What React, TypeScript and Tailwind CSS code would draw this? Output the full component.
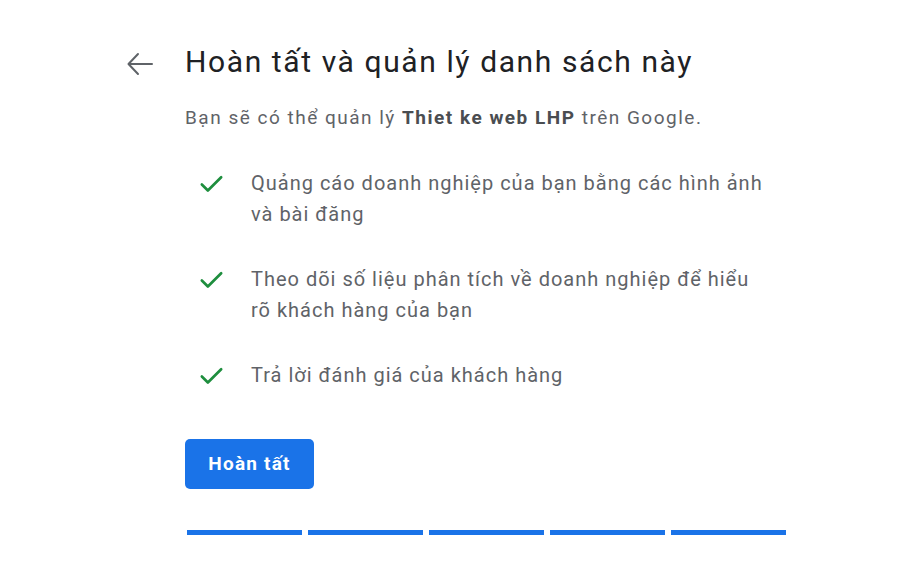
import { Check } from "lucide-react";

const items = [
  "Quảng cáo doanh nghiệp của bạn bằng các hình ảnh và bài đăng",
  "Theo dõi số liệu phân tích về doanh nghiệp để hiểu rõ khách hàng của bạn",
  "Trả lời đánh giá của khách hàng",
];

export default function App() {
  return (
    <div className="w-[900px] h-[572px] bg-white overflow-hidden font-['Roboto',sans-serif]">
      <div className="flex pt-[40px] pl-[124px]">
        {/* back arrow */}
        <div className="w-[61px] pt-[11px]">
          <svg width="32" height="26" viewBox="0 0 32 26" fill="none" stroke="#5f6368" strokeWidth="2" strokeLinecap="round" strokeLinejoin="round">
            <path d="M28 13H5" />
            <path d="M14 3L4.5 13L14 23" />
          </svg>
        </div>

        <div className="flex flex-col">
          <h1 className="text-[30px] leading-[44px] tracking-[1.6px] text-[#202124]">Hoàn tất và quản lý danh sách này</h1>
          <p className="mt-[21px] text-[19px] leading-[26px] tracking-[1.5px] text-[#5f6368]">
            Bạn sẽ có thể quản lý <span className="font-bold text-[#4a4d51]">Thiet ke web LHP</span> trên Google.
          </p>

          <ul className="mt-[37px] flex flex-col gap-[34px]">
            {items.map((t) => (
              <li key={t} className="flex">
                <div className="w-[66px] pl-[12px] pt-[2px]">
                  <Check size={29} strokeWidth={2.2} className="text-[#1e8e3e]" />
                </div>
                <span className="w-[520px] text-[20px] leading-[31px] tracking-[1px] text-[#5f6368]">{t}</span>
              </li>
            ))}
          </ul>

          <button className="mt-[48px] w-[129px] h-[50px] rounded-[5px] bg-[#1a73e8] text-white text-[19px] font-bold tracking-[1.2px]">
            Hoàn tất
          </button>

          <div className="mt-[41px] ml-[2px] flex gap-[6px]">
            {[0, 1, 2, 3, 4].map((i) => (
              <div key={i} className="w-[115px] h-[5px] bg-[#1a73e8]" />
            ))}
          </div>
        </div>
      </div>
    </div>
  );
}
